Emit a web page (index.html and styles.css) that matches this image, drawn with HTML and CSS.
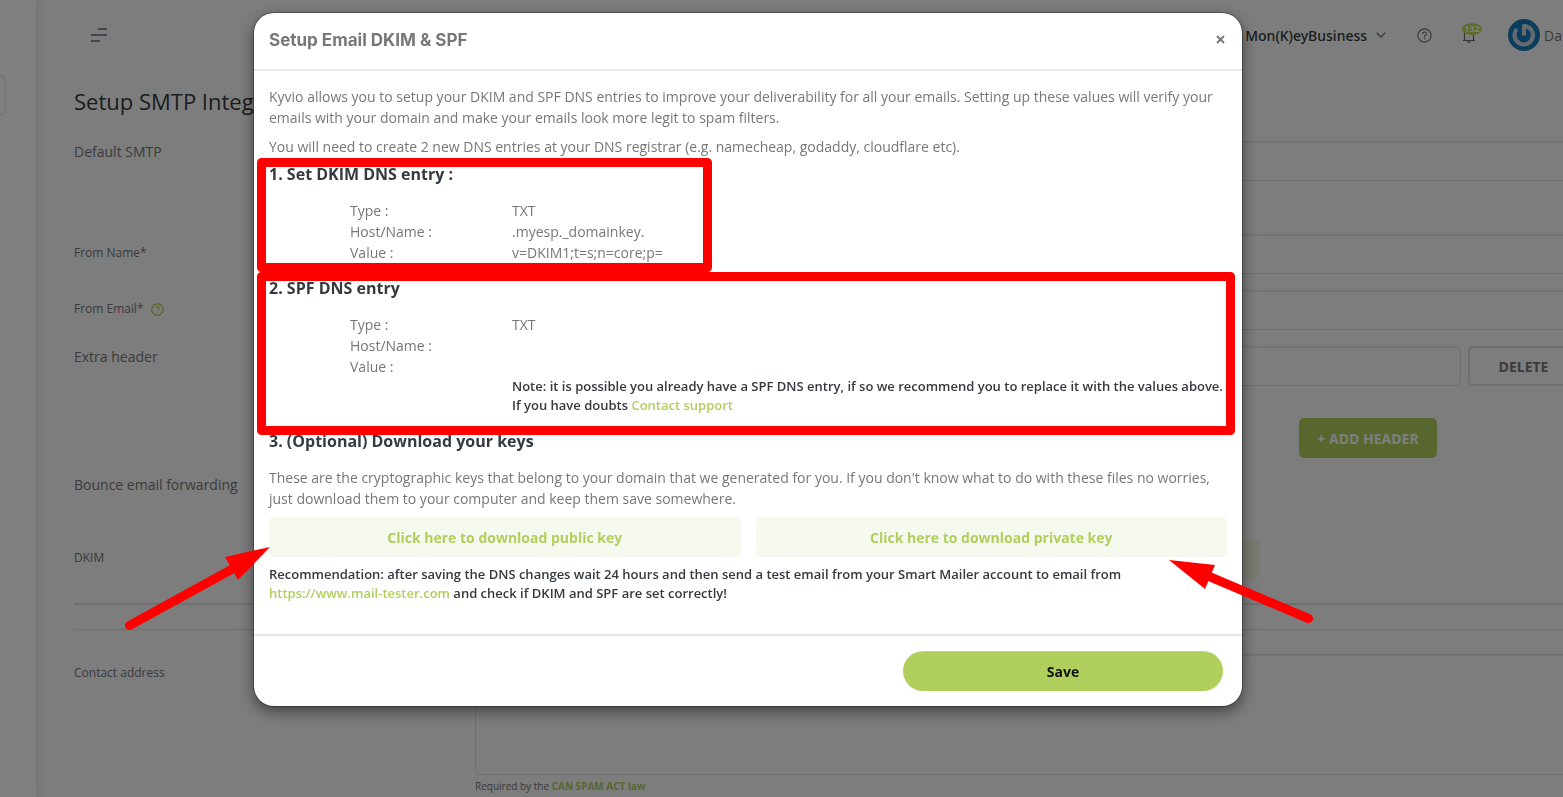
FILE: index.html
```html
<!DOCTYPE html>
<html lang="en">
<head>
<meta charset="utf-8">
<title>Setup SMTP Integration</title>
<link rel="stylesheet" href="styles.css">
</head>
<body>
<div class="app">
  <aside class="sidebar"><input class="field sidebar-search" type="text" aria-label="Search menu"></aside>
  <div class="main">
    <header class="topbar">
      <button class="icon-btn" type="button" aria-label="Toggle menu">
        <svg width="18" height="16" viewBox="0 0 18 16" stroke="#8c8e98" stroke-width="2"><path d="M8 2h9M1 8h16M1 14h9"/></svg>
      </button>
      <nav class="topnav">
        <button class="account" type="button">Mon(K)eyBusiness
          <svg width="10" height="6" viewBox="0 0 10 6" fill="none" stroke="#777" stroke-width="1.3"><path d="M.7.7 5 5 9.3.7"/></svg>
        </button>
        <button class="icon-btn help" type="button" aria-label="Help">
          <svg width="15" height="15" viewBox="0 0 15 15" fill="none" stroke="#6c6c6c" stroke-width="1.1"><circle cx="7.5" cy="7.5" r="6.6"/><path d="M5.6 6a1.9 1.9 0 1 1 2.8 1.600c-.7.4-.9.7-.9 1.400M7.500 10v1.300"/></svg>
        </button>
        <button class="icon-btn bell" type="button" aria-label="Notifications">
          <svg width="14" height="17" viewBox="0 0 14 17" fill="none" stroke="#6c6c6c" stroke-width="1.2"><path d="M1 13.500h12M2.500 13.500V7a4.500 4.500 0 0 1 9 0v6.500M5.500 14.500q1.500 1.800 3 0"/></svg>
          <span class="badge">132</span>
        </button>
        <span class="user">
          <svg width="32" height="32" viewBox="0 0 32 32" fill="none"><circle cx="16" cy="16" r="16" fill="#1478b8"/><path d="M16 16.500V7A9.200 9.200 0 1 1 8.800 10.200" stroke="#c8d6de" stroke-width="4.200" stroke-linejoin="round"/></svg>
          Da
        </span>
      </nav>
    </header>
    <form class="settings">
      <h1 class="page-title">Setup SMTP Integration</h1>
      <div class="row row-smtp"><label class="label" for="smtp">Default SMTP</label><select class="field" id="smtp"><option></option></select></div>
      <div class="row"><label class="label small" for="fname">From Name*</label><input class="field" id="fname" type="text"></div>
      <div class="row"><label class="label small" for="femail">From Email*
        <svg width="13" height="13" viewBox="0 0 15 15" fill="none" stroke="#b0cf5d" stroke-width="1.4"><circle cx="7.5" cy="7.5" r="6.600"/><path d="M5.600 6a1.900 1.900 0 1 1 2.800 1.600c-.7.4-.9.7-.9 1.400M7.500 10v1.300"/></svg></label><input class="field" id="femail" type="text"></div>
      <div class="row row-extra"><label class="label" for="extra">Extra header</label>
        <div class="extra"><input class="field" id="extra" type="text"><button class="btn btn-outline" type="button">DELETE</button></div>
      </div>
      <div class="add-line"><button class="btn btn-green" type="button">+ ADD HEADER</button></div>
      <div class="row row-bounce"><span class="label">Bounce email forwarding</span></div>
      <div class="row row-dkim"><span class="label small">DKIM</span><button class="btn btn-soft setup" type="button" aria-label="Setup DKIM"></button></div>
      <hr class="rule thick">
      <hr class="rule">
      <div class="row row-address"><label class="label small" for="addr">Contact address</label>
        <div class="stack"><textarea class="field area" id="addr"></textarea><p class="hint">Required by the <a href="#">CAN SPAM ACT law</a></p></div>
      </div>
    </form>
  </div>
</div>

<div class="overlay">
  <section class="modal" role="dialog" aria-labelledby="modal-title">
    <header class="modal-head">
      <h2 class="modal-title" id="modal-title">Setup Email DKIM &amp; SPF</h2>
      <button class="close" type="button" aria-label="Close"><svg width="9" height="9" viewBox="0 0 9 9" stroke="#777" stroke-width="1.8"><path d="M1 1l7 7M8 1 1 8"/></svg></button>
    </header>
    <div class="modal-body">
      <p class="text">Kyvio allows you to setup your DKIM and SPF DNS entries to improve your deliverability for all your emails. Setting up these values will verify your emails with your domain and make your emails look more legit to spam filters.</p>
      <p class="text">You will need to create 2 new DNS entries at your DNS registrar (e.g. namecheap, godaddy, cloudflare etc).</p>
      <h3 class="step">1. Set DKIM DNS entry :</h3>
      <dl class="record">
        <dt>Type :</dt><dd>TXT</dd>
        <dt>Host/Name :</dt><dd>.myesp._domainkey.</dd>
        <dt>Value :</dt><dd>v=DKIM1;t=s;n=core;p=</dd>
      </dl>
      <h3 class="step">2. SPF DNS entry</h3>
      <dl class="record">
        <dt>Type :</dt><dd>TXT</dd>
        <dt>Host/Name :</dt><dd></dd>
        <dt>Value :</dt><dd></dd>
      </dl>
      <p class="note indent">Note: it is possible you already have a SPF DNS entry, if so we recommend you to replace it with the values above. If you have doubts <a href="#">Contact support</a></p>
      <h3 class="step">3. (Optional) Download your keys</h3>
      <p class="text">These are the cryptographic keys that belong to your domain that we generated for you. If you don't know what to do with these files no worries, just download them to your computer and keep them save somewhere.</p>
      <div class="downloads">
        <button class="btn btn-soft" type="button">Click here to download public key</button>
        <button class="btn btn-soft" type="button">Click here to download private key</button>
      </div>
      <p class="note">Recommendation: after saving the DNS changes wait 24 hours and then send a test email from your Smart Mailer account to email from <a href="#">https://www.mail-tester.com</a> and check if DKIM and SPF are set correctly!</p>
    </div>
    <footer class="modal-foot"><button class="save" type="button">Save</button></footer>
  </section>
</div>

<svg class="marks" aria-hidden="true" fill="none" stroke="#f00" stroke-width="9" stroke-linecap="round" stroke-linejoin="round">
  <rect x="261.5" y="162.5" width="446" height="105"/>
  <rect x="261.5" y="276.5" width="969" height="154"/>
  <path d="M129.500 625.500 236 567"/>
  <path d="M1308.500 618.500 1208 576"/>
  <path d="M270 547 225 557 238 580ZM1169 560l46 5-10 24Z" fill="#f00" stroke="none"/>
</svg>
</body>
</html>
```
FILE: styles.css
```css
* { box-sizing: border-box; }
body { margin: 0; font-family: "Open Sans", "Noto Sans", sans-serif; font-size: 14px; line-height: 21px; color: #777; background: #fafafa; overflow: hidden; }
h1, h2, h3, p, dl, dd, hr { margin: 0; }
button, input, select, textarea { font: inherit; color: inherit; }
button { border: 0; background: none; padding: 0; cursor: pointer; }
a { color: #b0cf5d; text-decoration: none; }
svg { display: block; flex: none; }

.app { display: flex; height: 100vh; overflow: hidden; }
.sidebar { width: 36px; flex: none; background: #fff; padding-top: 75px; box-shadow: 0 0 10px rgba(0, 0, 0, .12); }
.sidebar-search { width: 37px; margin-left: -30px; }
.main { flex: 1; min-width: 0; }
.topbar { display: flex; justify-content: space-between; align-items: center; height: 70px; padding-left: 54px; }
.topnav { display: flex; align-items: center; }
.account { display: flex; align-items: center; gap: 9px; color: #343a40; font-family: "Noto Sans", sans-serif; font-weight: 500; }
.help { margin-left: 31px; }
.bell { margin-left: 30px; position: relative; }
.badge { position: absolute; left: 0; top: -4px; width: 20px; border-radius: 50%; background: #b8dc50; color: #fff; font-size: 9px; font-weight: 700; line-height: 12px; }
.user { display: flex; align-items: center; gap: 4px; margin: 0 1px 0 32px; }

.settings { padding: 16px 0 0 38px; }
.page-title { font-size: 22px; line-height: 30px; font-weight: 400; color: #343a40; margin-bottom: 25px; }
.row { display: grid; grid-template-columns: 401px 1fr; align-items: start; margin: 0 -20px 16px 0; }
.row-smtp { margin-bottom: 53px; }
.row-extra { margin-bottom: 32px; }
.row-bounce { margin-bottom: 43px; }
.row-dkim { margin-bottom: 24px; }
.row-address { margin-top: 24px; }
.label { line-height: 22px; }
.label.small { display: flex; align-items: center; gap: 7px; font-size: 12px; line-height: 20px; padding-top: 9px; }
.field { appearance: none; display: block; width: 100%; height: 40px; border: 1px solid #dfe0e2; border-radius: 5px; background: transparent; box-shadow: inset 0 1px 1px rgba(0, 0, 0, .06); }
.area { height: 121px; resize: none; }
.extra { display: grid; grid-template-columns: 1fr 115px; gap: 7px; }
.btn { height: 40px; border-radius: 5px; font-weight: 700; }
.btn-outline { border: 2px solid #dfe0e2; padding-right: 4px; }
.add-line { margin-bottom: 16px; padding-right: 126px; text-align: right; height: 40px; }
.btn-green { width: 138px; background: #b0cf5d; color: #fff; }
.btn-soft { background: #f6f9ee; color: #b0cf5d; }
.setup { width: 785px; background: #f3f5e4; }
.rule { border: 0; border-top: 1px solid #dfe0e2; margin-bottom: 24px; }
.rule.thick { border-top-width: 2px; }
.hint { font-size: 10px; line-height: 20px; margin-top: 1px; }
.hint a { font-weight: 700; }

.overlay { position: fixed; inset: 0; background: rgba(0, 0, 0, .5); display: flex; align-items: flex-start; padding: 13px 321px 0 254px; }
.modal { flex: 1; background: #fff; border-radius: 20px; box-shadow: 0 0 0 1px rgba(0, 0, 0, .3), 0 5px 15px rgba(0, 0, 0, .5); }
.modal-head { display: flex; justify-content: space-between; align-items: center; height: 58px; padding: 0 17px 3px 15px; border-bottom: 2px solid #e4e7ea; }
.modal-title { font-family: Inter, sans-serif; font-size: 17px; font-weight: 700; line-height: 24px; }
.modal-body { padding: 15px 15px 31px; }
.text { margin-bottom: 8px; }
.step { font-size: 16px; line-height: 19px; font-weight: 700; color: #343a40; margin: 0 0 16px; }
.record { display: grid; grid-template-columns: 162px 1fr; grid-auto-rows: 21px; padding-left: 81px; margin-bottom: 16px; }
.note { font-size: 13px; line-height: 19px; font-weight: 600; color: #343a40; }
.indent { margin: -16px 0 17px; padding-left: 243px; }
.downloads { display: grid; grid-template-columns: 1fr 1fr; gap: 15px; margin-bottom: 8px; }
.modal-foot { display: flex; justify-content: flex-end; padding: 15px 19px; border-top: 2px solid #e4e7ea; }
.save { width: 320px; height: 40px; border-radius: 20px; background: #b0cf5d; color: #111; font-weight: 700; box-shadow: inset 0 2px 1px -1px rgba(255, 255, 255, .2); }
.marks { position: fixed; inset: 0; width: 100%; height: 100%; pointer-events: none; }
```
